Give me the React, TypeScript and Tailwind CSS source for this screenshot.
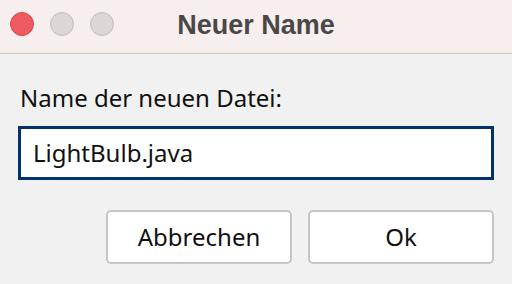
export default function App() {
  return (
    <div className="w-[512px] h-[284px] bg-[#f1f1f1] flex flex-col overflow-hidden" style={{ fontFamily: '"Noto Sans", "Open Sans", sans-serif' }}>
      {/* Title bar */}
      <div className="relative h-[54px] shrink-0 bg-[#f7efee] border-b border-[#cfcaca] flex items-center justify-center">
        <div className="absolute left-[10px] top-[12px] flex gap-4">
          <div className="w-6 h-6 rounded-full bg-[#ee5a5f] border border-[#d9484d]" />
          <div className="w-6 h-6 rounded-full bg-[#dcd6d5] border border-[#c3bdbc]" />
          <div className="w-6 h-6 rounded-full bg-[#dcd6d5] border border-[#c3bdbc]" />
        </div>
        <span className="text-[27px] font-bold text-[#4a4847] pb-[2px]" style={{ fontFamily: '"Liberation Sans", Arial, sans-serif' }}>
          Neuer Name
        </span>
      </div>

      {/* Body */}
      <div className="flex flex-col px-[18px] pt-[29px]">
        <div className="text-[24px] leading-[30px] text-[#111] pl-[2px]">Name der neuen Datei:</div>
        <div className="mt-[13px] h-[54px] w-[476px] border-[3px] border-[#00336b] bg-white flex items-center px-[12px]">
          <span className="text-[24px] text-[#111]">LightBulb.java</span>
        </div>
        <div className="mt-[30px] flex justify-end gap-4">
          <button className="w-[186px] h-[54px] rounded-[5px] border-2 border-[#c6c6c6] bg-white text-[24px] text-[#111]">
            Abbrechen
          </button>
          <button className="w-[186px] h-[54px] rounded-[5px] border-2 border-[#c6c6c6] bg-white text-[24px] text-[#111]">
            Ok
          </button>
        </div>
      </div>
    </div>
  );
}
